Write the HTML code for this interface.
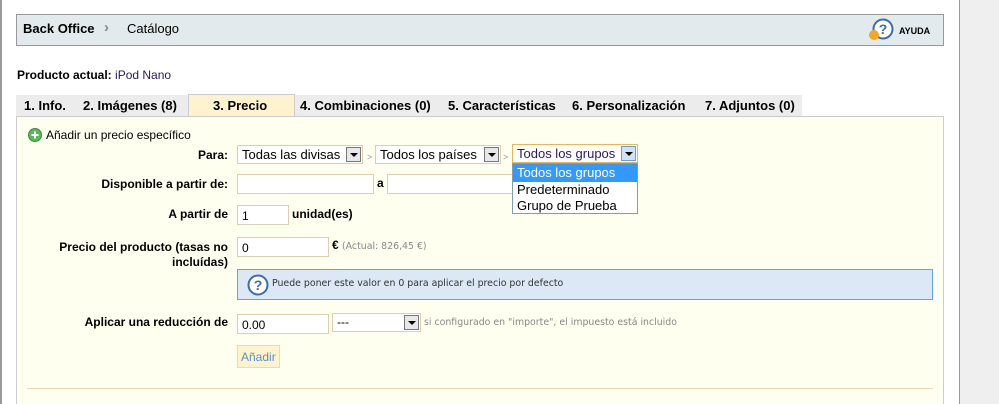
<!DOCTYPE html>
<html style="overflow:hidden;width:999px;height:404px"><head><meta charset="utf-8"><style>
*{margin:0;padding:0;box-sizing:border-box}
body{width:999px;height:404px;overflow:hidden;background:#fff;font-family:"Liberation Sans",sans-serif;font-size:12px;color:#000;position:relative}
.a{position:absolute}
.lbl{position:absolute;font-weight:bold;text-align:right;width:220px;left:8px;font-size:12px}
.inp{position:absolute;background:#fff;border:1px solid #dccfb0;height:20px;font-size:12px;padding:3px 4px;color:#000}
.sel{position:absolute;background:#fff;border:1px solid #dccfb0;height:19px;font-size:13px;padding:1px 4px;white-space:nowrap}
.arr{position:absolute;right:1px;top:1px;width:15px;height:15px;background:#e8e8e8;border:1px solid #777}
.arr:after{content:"";position:absolute;left:3px;top:5px;border-left:4px solid transparent;border-right:4px solid transparent;border-top:4px solid #000}
.gt{position:absolute;font-size:9px;color:#999}
.sm{font-family:"DejaVu Sans",sans-serif;font-size:9.4px;white-space:nowrap}
</style></head><body>
<div class="a" style="left:0;top:0;width:2px;height:404px;background:#999"></div>
<div class="a" style="left:959px;top:0;width:40px;height:404px;background:#efefef;border-left:1px solid #999"></div>
<div class="a" style="left:16px;top:14px;width:928px;height:32px;background:#e2eaee;border:1px solid #999"></div>
<div class="a" style="left:23px;top:21px;font-size:13px;font-weight:bold">Back Office</div>
<div class="a" style="left:104px;top:19px;font-size:15px;font-weight:bold;color:#888">›</div>
<div class="a" style="left:127px;top:21px;font-size:13px">Catálogo</div>
<svg class="a" style="left:868px;top:18px" width="28" height="24" viewBox="0 0 28 24"><circle cx="15" cy="11" r="9.5" fill="#fff" stroke="#3a6ea5" stroke-width="2"/><text x="15" y="16" font-size="14" font-weight="bold" fill="#3a6ea5" text-anchor="middle" font-family="Liberation Sans">?</text><circle cx="6" cy="17" r="5" fill="#f5a623"/></svg>
<div class="a" style="left:899px;top:26px;font-size:9px;font-weight:bold">AYUDA</div>
<div class="a" style="left:17px;top:68px;font-size:12px"><b>Producto actual:</b> <span style="color:#2a1a5e">iPod Nano</span></div>
<div class="a" style="left:16px;top:95px;width:786px;height:21px;background:#ececec"></div>
<div class="a" style="left:188px;top:94px;width:107px;height:23px;background:#fff3cf;border:1px solid #ccc;border-bottom:none"></div>
<div class="a" style="left:24px;top:98px;font-size:13px;font-weight:bold;white-space:nowrap">1. Info.</div>
<div class="a" style="left:83px;top:98px;font-size:13px;font-weight:bold">2. Imágenes (8)</div>
<div class="a" style="left:213px;top:98px;font-size:13px;font-weight:bold">3. Precio</div>
<div class="a" style="left:300px;top:98px;font-size:13px;font-weight:bold">4. Combinaciones (0)</div>
<div class="a" style="left:448px;top:98px;font-size:13px;font-weight:bold">5. Características</div>
<div class="a" style="left:572px;top:98px;font-size:13px;font-weight:bold">6. Personalización</div>
<div class="a" style="left:705px;top:98px;font-size:13px;font-weight:bold">7. Adjuntos (0)</div>
<div class="a" style="left:16px;top:116px;width:928px;height:300px;background:#fffff0;border:1px solid #ccc"></div>
<svg class="a" style="left:28px;top:128px" width="14" height="14"><circle cx="7" cy="7" r="6.5" fill="#5cb85c" stroke="#3c8a3c"/><path d="M7 3.5v7M3.5 7h7" stroke="#fff" stroke-width="2"/></svg>
<div class="a" style="left:46px;top:128px">Añadir un precio específico</div>
<div class="lbl" style="top:148px">Para:</div>
<div class="sel" style="left:237px;top:145px;width:126px">Todas las divisas<div class="arr"></div></div>
<div class="gt" style="left:367px;top:152px">&gt;</div>
<div class="sel" style="left:375px;top:145px;width:126px">Todos los países<div class="arr"></div></div>
<div class="gt" style="left:503px;top:152px">&gt;</div>
<div class="lbl" style="top:177px">Disponible a partir de:</div>
<div class="inp" style="left:237px;top:174px;width:137px"></div>
<div class="a" style="left:377px;top:176px;font-weight:bold">a</div>
<div class="inp" style="left:387px;top:174px;width:137px"></div>
<div class="sel" style="left:512px;top:144px;width:126px;border:1px solid #e5b95a;color:#2a1a5e">Todos los grupos<div class="arr" style="background:#cfe3f7;border-color:#6a9ed0"></div></div>
<div class="a" style="left:512px;top:163px;width:126px;height:51px;background:#fff;border:1px solid #7f9db9;font-size:13px;line-height:16px">
<div style="background:#3399ff;color:#fff;padding-left:4px;height:18px;line-height:18px">Todos los grupos</div>
<div style="padding-left:4px">Predeterminado</div><div style="padding-left:4px">Grupo de Prueba</div></div>
<div class="lbl" style="top:207px">A partir de</div>
<div class="inp" style="left:237px;top:205px;width:52px">1</div>
<div class="a" style="left:292px;top:207px;font-weight:bold">unidad(es)</div>
<div class="lbl" style="top:240px;line-height:15px">Precio del producto (tasas no<br>incluídas)</div>
<div class="inp" style="left:237px;top:237px;width:92px">0</div>
<div class="a" style="left:332px;top:238px;font-weight:bold">€ <span class="sm" style="font-weight:normal;color:#888">(Actual: 826,45 €)</span></div>
<div class="a" style="left:237px;top:269px;width:696px;height:31px;background:#dce8f6;border:1px solid #5aa9de"></div>
<svg class="a" style="left:247px;top:274px" width="22" height="22"><circle cx="11" cy="11" r="9.5" fill="#fff" stroke="#3a6ea5" stroke-width="2"/><text x="11" y="16" font-size="14" font-weight="bold" fill="#3a6ea5" text-anchor="middle" font-family="Liberation Sans">?</text></svg>
<div class="a sm" style="left:272px;top:278px;color:#333">Puede poner este valor en 0 para aplicar el precio por defecto</div>
<div class="lbl" style="top:315px">Aplicar una reducción de</div>
<div class="inp" style="left:237px;top:314px;width:92px">0.00</div>
<div class="sel" style="left:332px;top:313px;width:89px;font-size:12px">---<div class="arr"></div></div>
<div class="a sm" style="left:424px;top:317px;color:#888">si configurado en "importe", el impuesto está incluido</div>
<div class="a" style="left:237px;top:345px;width:43px;height:23px;background:#fff3cf;border:1px solid #e8dcb8;color:#5b8fc7;font-size:12px;padding:4px 3px">Añadir</div>
<div class="a" style="left:27px;top:388px;width:906px;height:1px;background:#e5d7b5"></div>
</body></html>
